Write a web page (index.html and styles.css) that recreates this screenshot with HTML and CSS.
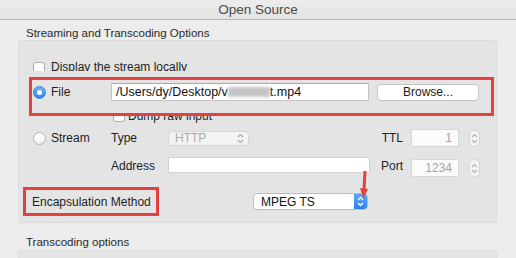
FILE: index.html
```html
<!DOCTYPE html>
<html lang="en">
<head>
    <meta charset="UTF-8">
    <title>Open Source</title>
    <link rel="stylesheet" href="styles.css">
</head>
<body>
    <div class="window">
        <div class="titlebar">Open Source</div>

        <div class="section-title">Streaming and Transcoding Options</div>
        <div class="group">
            <div class="row-display">
                <span class="checkbox"></span>
                <span>Display the stream locally</span>
            </div>

            <div class="row row-file">
                <label class="choice"><span class="radio on"></span>File</label>
                <div class="field path">/Users/dy/Desktop/v<span class="smudge"></span>t.mp4</div>
                <button class="btn" type="button">Browse...</button>
            </div>

            <div class="row-dump">
                <div class="dump-inner">
                    <span class="checkbox"></span>
                    <span>Dump raw input</span>
                </div>
            </div>

            <div class="row row-stream">
                <label class="choice"><span class="radio"></span>Stream</label>
                <span class="lbl">Type</span>
                <div class="popup disabled">
                    <span>HTTP</span>
                    <svg class="updown" viewBox="0 0 7 11"><path d="M1 4 L3.5 1.5 L6 4 M1 7 L3.5 9.5 L6 7"/></svg>
                </div>
                <span class="lbl-right ttl">TTL</span>
                <div class="field num">1</div>
                <span class="stepper"><svg viewBox="0 0 7 13"><path d="M1 5 L3.5 2.5 L6 5 M1 8 L3.5 10.5 L6 8"/></svg></span>
            </div>

            <div class="row row-address">
                <span class="choice"></span>
                <span class="lbl">Address</span>
                <div class="field address"></div>
                <span class="lbl-right port">Port</span>
                <div class="field num port-field">1234</div>
                <span class="stepper port-stepper"><svg viewBox="0 0 7 13"><path d="M1 5 L3.5 2.5 L6 5 M1 8 L3.5 10.5 L6 8"/></svg></span>
            </div>

            <div class="row row-encap">
                <span class="encap-lbl">Encapsulation Method</span>
                <div class="popup format">
                    <span>MPEG TS</span>
                    <span class="popup-arrows"><svg viewBox="0 0 7 11"><path d="M1 4 L3.5 1.5 L6 4 M1 7 L3.5 9.5 L6 7"/></svg></span>
                </div>
            </div>
        </div>

        <div class="section-title second">Transcoding options</div>
        <div class="group group-next"></div>

        <!-- annotation marks drawn over the dialog -->
        <div class="mark mark-file"></div>
        <div class="mark mark-encap"></div>
        <svg class="arrow" viewBox="0 0 16 36">
            <path d="M9 1 L8 20" />
            <polygon points="4,18 12,19 7.5,28" />
        </svg>
    </div>
</body>
</html>
```

FILE: styles.css
```css
body {
    margin: 0;
    background-color: #ececec;
    font-family: 'Liberation Sans', Arial, sans-serif;
    font-size: 12px;
    color: #1e1e1e;
}

.window {
    position: relative;
    width: 516px;
    height: 258px;
    overflow: hidden;
    background-color: #ececec;
}

.titlebar {
    height: 19px;
    line-height: 19px;
    text-align: center;
    font-size: 13.5px;
    color: #4b4b4b;
    background: linear-gradient(#ececec, #e4e4e4);
    border-bottom: 1px solid #b9b9b9;
}

.section-title {
    padding: 7px 0 0 26px;
    height: 13px;
    line-height: 13px;
    font-size: 11.5px;
    color: #2a2a2a;
}

.section-title.second {
    padding-top: 13px;
}

.group {
    box-sizing: border-box;
    margin: 0 0 0 18px;
    width: 479px;
    height: 183px;
    background-color: #e4e4e4;
    border: 1px solid #dcdcdc;
    border-radius: 3px;
    padding: 0 0 0 14px;
}

.group-next {
    margin-top: 1px;
}

.row {
    display: flex;
    align-items: center;
}

.checkbox {
    display: inline-block;
    box-sizing: border-box;
    width: 12px;
    height: 12px;
    background: #fff;
    border: 1px solid #ababab;
    border-radius: 3px;
    margin-right: 6px;
    flex-shrink: 0;
}

.row-display {
    display: flex;
    align-items: flex-start;
    margin-top: 19px;
    height: 11px;
    line-height: 14px;
    overflow: hidden;
}

.row-display .checkbox {
    margin-top: 2px;
}

.row-file {
    margin-top: 12px;
    height: 18px;
}

.choice {
    display: flex;
    align-items: center;
    width: 78px;
    flex-shrink: 0;
}

.radio {
    box-sizing: border-box;
    width: 13px;
    height: 13px;
    border-radius: 50%;
    background: linear-gradient(#ffffff, #f2f2f2);
    border: 1px solid #b3b3b3;
    margin-right: 5px;
    position: relative;
}

.radio.on {
    background: linear-gradient(#6cb4fb, #2f85f0);
    border-color: #3b82de;
}

.radio.on::after {
    content: "";
    position: absolute;
    left: 3px;
    top: 3px;
    width: 5px;
    height: 5px;
    border-radius: 50%;
    background: #fff;
}

.field {
    box-sizing: border-box;
    background: #fff;
    border: 1px solid #c3c3c3;
    border-top-color: #a9a9a9;
}

.path {
    width: 258px;
    height: 18px;
    line-height: 16px;
    padding-left: 4px;
    font-size: 12.5px;
    color: #111;
    white-space: nowrap;
}

.smudge {
    display: inline-block;
    width: 42px;
    height: 10px;
    vertical-align: -1px;
    background: #c4c4c4;
    filter: blur(1.5px);
}

.btn {
    margin-left: 8px;
    width: 102px;
    height: 17px;
    padding: 0;
    font-family: inherit;
    font-size: 12px;
    color: #222;
    background: #fff;
    border: 1px solid #c4c4c4;
    border-radius: 4px;
}

.row-dump {
    margin-top: 15px;
    height: 8px;
    overflow: hidden;
    padding-left: 80px;
}

.dump-inner {
    display: flex;
    align-items: center;
    margin-top: -8px;
    height: 16px;
}

.dump-inner .checkbox {
    margin-right: 3px;
}

.row-stream {
    margin-top: 5px;
    height: 18px;
}

.lbl {
    width: 57px;
    flex-shrink: 0;
}

.lbl-right {
    text-align: right;
    flex-shrink: 0;
}

.ttl {
    width: 154px;
}

.popup {
    box-sizing: border-box;
    display: flex;
    align-items: center;
    justify-content: space-between;
    background: #fff;
    border: 1px solid #bdbdbd;
    border-radius: 4px;
}

.popup.disabled {
    width: 81px;
    height: 15px;
    padding: 0 4px 0 6px;
    background: #f3f3f3;
    border-color: #d6d6d6;
    color: #aaa;
}

.updown {
    width: 7px;
    height: 11px;
    fill: none;
    stroke: #a8a8a8;
    stroke-width: 1.2;
}

.num {
    width: 48px;
    height: 18px;
    margin-left: 8px;
    line-height: 16px;
    text-align: right;
    padding-right: 6px;
    color: #a3a3a3;
    background: #fbfbfb;
    border-color: #d6d6d6;
}

.stepper {
    box-sizing: border-box;
    display: flex;
    align-items: center;
    justify-content: center;
    width: 11px;
    height: 17px;
    margin-left: 10px;
    background: #f5f5f5;
    border: 1px solid #d4d4d4;
    border-radius: 5px;
}

.stepper svg {
    width: 7px;
    height: 13px;
    fill: none;
    stroke: #b3b3b3;
    stroke-width: 1.2;
}

.row-address {
    margin-top: 10px;
    height: 20px;
    align-items: flex-start;
}

.address {
    width: 202px;
    height: 16px;
    border-color: #d2d2d2;
}

.row-address .lbl {
    line-height: 18px;
}

.port {
    width: 33px;
    line-height: 18px;
}

.port-field,
.port-stepper {
    margin-top: 2px;
}

.port-stepper {
    height: 18px;
}

.row-encap {
    margin-top: 16px;
    height: 17px;
    margin-left: -1px;
}

.encap-lbl {
    width: 221px;
    flex-shrink: 0;
    line-height: 17px;
    margin-top: 1px;
}

.popup.format {
    width: 115px;
    height: 17px;
    padding-left: 7px;
    overflow: hidden;
    color: #111;
}

.popup-arrows {
    display: flex;
    align-items: center;
    justify-content: center;
    width: 13px;
    height: 17px;
    background: linear-gradient(#63a8f7, #2b7ee9);
}

.popup-arrows svg {
    width: 7px;
    height: 11px;
    fill: none;
    stroke: #fff;
    stroke-width: 1.3;
}

.mark {
    position: absolute;
    box-sizing: border-box;
    border: 3px solid #e3403e;
}

.mark-file {
    left: 29px;
    top: 77px;
    width: 465px;
    height: 39px;
}

.mark-encap {
    left: 23px;
    top: 187px;
    width: 136px;
    height: 29px;
}

.arrow {
    position: absolute;
    left: 356px;
    top: 170px;
    width: 16px;
    height: 36px;
    stroke: #e3403e;
    fill: #e3403e;
    stroke-width: 3;
}

.arrow polygon {
    stroke: none;
}
```
